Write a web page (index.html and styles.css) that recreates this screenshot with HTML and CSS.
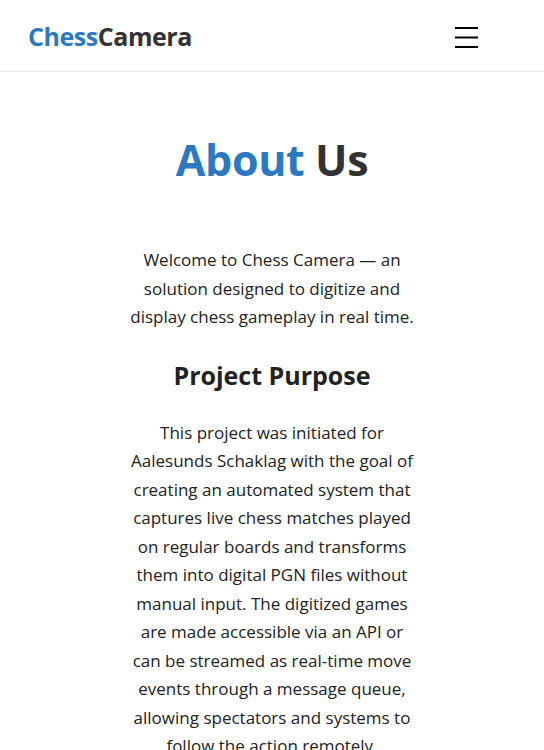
FILE: index.html
```html
<!DOCTYPE html>
<html lang="en">
<head>
<meta charset="utf-8">
<title>About Us - ChessCamera</title>
<link rel="stylesheet" href="styles.css">
</head>
<body>
<header class="site-header">
  <a class="logo" href="#"><span class="accent">Chess</span>Camera</a>
  <button class="menu-btn" aria-label="Menu">
    <svg width="23" height="22" viewBox="0 0 23 22"><rect x="0" y="1" width="23" height="2" fill="#000"/><rect x="0" y="10.5" width="23" height="2" fill="#000"/><rect x="0" y="20" width="23" height="2" fill="#000"/></svg>
  </button>
</header>
<main class="about">
  <h1 class="title"><span class="accent">About</span> Us</h1>
  <p class="text">Welcome to Chess Camera — an solution designed to digitize and display chess gameplay in real time.</p>
  <h2 class="subtitle">Project Purpose</h2>
  <p class="text">This project was initiated for Aalesunds Schaklag with the goal of creating an automated system that captures live chess matches played on regular boards and transforms them into digital PGN files without manual input. The digitized games are made accessible via an API or can be streamed as real-time move events through a message queue, allowing spectators and systems to follow the action remotely.</p>
</main>
</body>
</html>
```
FILE: styles.css
```css
* { box-sizing: border-box; }
body {
  margin: 0;
  font-family: "Open Sans", "Noto Sans", sans-serif;
  color: #222;
  background: #fff;
}
.site-header {
  height: 72px;
  border-bottom: 1px solid #eaeaea;
  display: flex;
  align-items: center;
  justify-content: space-between;
  padding: 0 66px 0 28px;
}
.logo {
  font-size: 25px;
  font-weight: 700;
  color: #333;
  text-decoration: none;
  letter-spacing: -0.45px;
}
.accent { color: #2b79c2; }
.menu-btn {
  background: none;
  border: 0;
  padding: 0;
  display: flex;
  margin-top: 2px;
}
.about {
  display: flex;
  flex-direction: column;
  align-items: center;
  text-align: center;
}
.title {
  margin: 58px 0 0;
  font-size: 43px;
  line-height: 60px;
  font-weight: 700;
  color: #333;
  letter-spacing: -0.4px;
}
.text {
  width: 290px;
  margin: 0;
  font-size: 17px;
  line-height: 28.5px;
}
.title + .text { margin-top: 56px; }
.subtitle {
  margin: 25px 0 26px;
  font-size: 25px;
  line-height: 36px;
  font-weight: 700;
}
```
